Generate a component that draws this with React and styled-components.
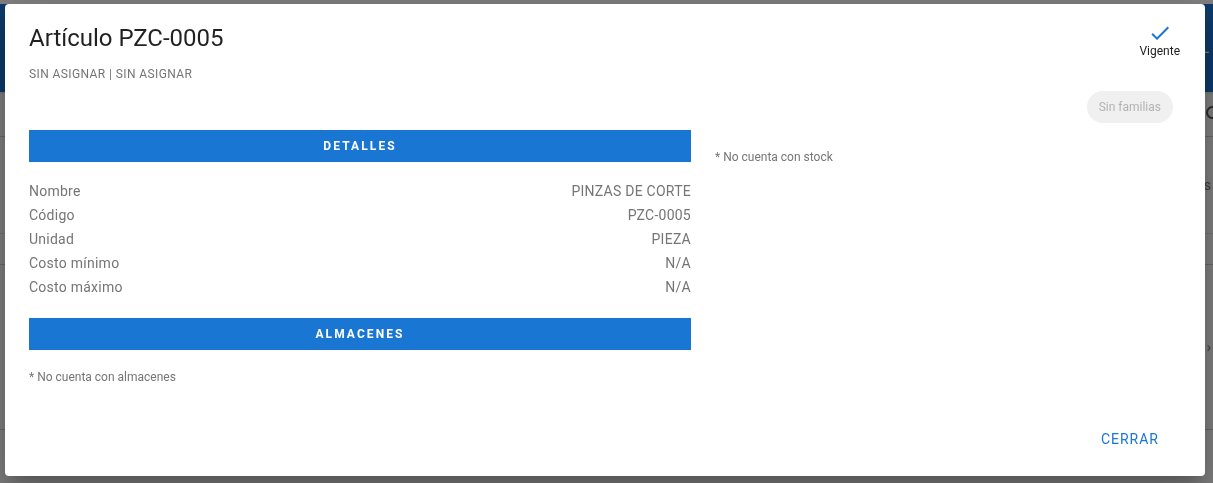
import React from "react";
import styled, { createGlobalStyle } from "styled-components";

const GlobalStyle = createGlobalStyle`
  html, body {
    margin: 0;
    padding: 0;
    background: #ffffff;
    font-family: Roboto, "Liberation Sans", Arial, sans-serif;
  }
`;

// --- page that sits behind the dialog (only a thin strip shows) ---
const Page = styled.div`
  width: 1213px;
  height: 483px;
  overflow: hidden;
  background: #ffffff;
`;

const AppBar = styled.div`
  margin-top: 4px;
  height: 88px;
  background: #1976d2;
  display: flex;
  align-items: center;
  justify-content: flex-end;
  padding-right: 4px;
  color: #ffffff;
  font-size: 14px;
`;

const Toolbar = styled.div`
  height: 42px;
  border-top: 2px solid #f0f0f0;
  border-bottom: 1px solid #d0d0d0;
  display: flex;
  align-items: center;
  justify-content: flex-end;
  color: #555;
`;

const ListRow = styled.div`
  height: ${(p) => p.$h}px;
  border-bottom: 1px solid ${(p) => (p.$light ? "#e8e8e8" : "#d0d0d0")};
  display: flex;
  align-items: center;
  justify-content: flex-end;
  padding-right: 2px;
  color: #777;
  font-size: 14px;
`;

// --- dialog ---
const Overlay = styled.div`
  position: fixed;
  inset: 0;
  background: rgba(0, 0, 0, 0.5);
  display: flex;
  align-items: flex-start;
  padding: 4px 0 0 5px;
`;

const Dialog = styled.div`
  width: 1200px;
  background: #ffffff;
  border-radius: 4px;
  box-shadow: 0 11px 15px -7px rgba(0, 0, 0, 0.2),
    0 24px 38px 3px rgba(0, 0, 0, 0.14), 0 9px 46px 8px rgba(0, 0, 0, 0.12);
  display: flex;
  flex-direction: column;
`;

const Header = styled.div`
  display: flex;
  justify-content: space-between;
  align-items: flex-start;
  padding: 18px 24px 0 24px;
`;

const Title = styled.h2`
  margin: 0;
  font-size: 24px;
  line-height: 32px;
  font-weight: 400;
  color: rgba(0, 0, 0, 0.87);
`;

const Subtitle = styled.div`
  margin-top: 12px;
  font-size: 12px;
  line-height: 16px;
  letter-spacing: 0.4px;
  color: #757575;
`;

const Status = styled.div`
  margin-top: -1px;
  margin-right: 1px;
  display: flex;
  flex-direction: column;
  align-items: center;
`;

const StatusLabel = styled.span`
  margin-top: -1px;
  font-size: 12px;
  line-height: 14px;
  color: #222;
`;

const ChipRow = styled.div`
  display: flex;
  justify-content: flex-end;
  padding: 9px 32px 0 0;
`;

const Chip = styled.span`
  height: 32px;
  padding: 0 12px;
  border-radius: 16px;
  background: #f0f0f0;
  color: #b3b3b3;
  font-size: 12px;
  display: inline-flex;
  align-items: center;
`;

const Body = styled.div`
  margin-top: 7px;
  padding: 0 24px;
  display: grid;
  grid-template-columns: 662px 1fr;
  column-gap: 24px;
`;

const Column = styled.div`
  display: flex;
  flex-direction: column;
`;

const SectionBar = styled.div`
  height: 32px;
  margin-top: ${(p) => p.$gap || 0}px;
  background: #1976d2;
  color: #ffffff;
  font-size: 12px;
  font-weight: 700;
  letter-spacing: 2.1px;
  display: flex;
  align-items: center;
  justify-content: center;
`;

const DetailList = styled.div`
  margin-top: 17px;
  display: flex;
  flex-direction: column;
`;

const DetailRow = styled.div`
  display: flex;
  justify-content: space-between;
  font-size: 14px;
  line-height: 24px;
  letter-spacing: 0.25px;
  color: #757575;
`;

const Note = styled.div`
  margin-top: 19px;
  font-size: 12px;
  line-height: 16px;
  color: #757575;
`;

const Footer = styled.div`
  margin-top: 36px;
  padding: 0 30px 19px 0;
  display: flex;
  justify-content: flex-end;
`;

const TextButton = styled.button`
  height: 36px;
  padding: 0 16px;
  border: none;
  background: transparent;
  color: #1976d2;
  font-family: inherit;
  font-size: 14px;
  font-weight: 400;
  letter-spacing: 1px;
  text-transform: uppercase;
  cursor: pointer;
`;

const CheckIcon = () => (
  <svg width="24" height="24" viewBox="0 0 24 24">
    <path
      fill="#1976d2"
      d="M9 16.17L4.83 12l-1.42 1.41L9 19 21 7l-1.41-1.41z"
    />
  </svg>
);

const SearchIcon = () => (
  <svg width="24" height="24" viewBox="0 0 24 24" style={{ marginRight: -14 }}>
    <path
      fill="#555"
      d="M15.5 14h-.79l-.28-.27A6.47 6.47 0 0 0 16 9.5 6.5 6.5 0 1 0 9.5 16c1.61 0 3.09-.59 4.23-1.57l.27.28v.79l5 4.99L20.49 19l-4.99-5zm-6 0C7.01 14 5 11.99 5 9.5S7.01 5 9.5 5 14 7.01 14 9.5 11.99 14 9.5 14z"
    />
  </svg>
);

const details = [
  ["Nombre", "PINZAS DE CORTE"],
  ["Código", "PZC-0005"],
  ["Unidad", "PIEZA"],
  ["Costo mínimo", "N/A"],
  ["Costo máximo", "N/A"],
];

const App = () => {
  return (
    <>
      <GlobalStyle />
      <Page>
        <AppBar>L</AppBar>
        <Toolbar>
          <SearchIcon />
        </Toolbar>
        <ListRow $h={96} $light>s</ListRow>
        <ListRow $h={30}></ListRow>
        <ListRow $h={164}>›</ListRow>
      </Page>

      <Overlay>
        <Dialog>
          <Header>
            <div>
              <Title>Artículo PZC-0005</Title>
              <Subtitle>SIN ASIGNAR | SIN ASIGNAR</Subtitle>
            </div>
            <Status>
              <CheckIcon />
              <StatusLabel>Vigente</StatusLabel>
            </Status>
          </Header>

          <ChipRow>
            <Chip>Sin familias</Chip>
          </ChipRow>

          <Body>
            <Column>
              <SectionBar>DETALLES</SectionBar>
              <DetailList>
                {details.map(([label, value]) => (
                  <DetailRow key={label}>
                    <span>{label}</span>
                    <span>{value}</span>
                  </DetailRow>
                ))}
              </DetailList>
              <SectionBar $gap={19}>ALMACENES</SectionBar>
              <Note>* No cuenta con almacenes</Note>
            </Column>
            <Column>
              <Note>* No cuenta con stock</Note>
            </Column>
          </Body>

          <Footer>
            <TextButton>Cerrar</TextButton>
          </Footer>
        </Dialog>
      </Overlay>
    </>
  );
};

export default App;
